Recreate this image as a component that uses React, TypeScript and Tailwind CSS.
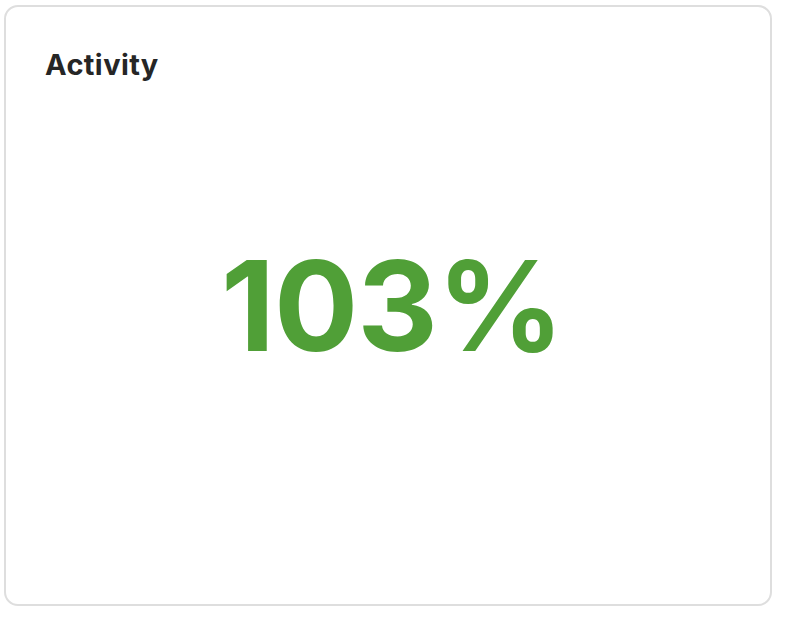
export default function App() {
  return (
    <div className="w-[790px] h-[618px] bg-white pt-[5px] pl-[4px]" style={{ fontFamily: 'Inter, "Noto Sans", sans-serif' }}>
      <div className="relative w-[768px] h-[601px] rounded-[14px] border-2 border-[#dedede] bg-white flex flex-col">
        <h2 className="absolute left-[39px] top-[41px] text-[29px] leading-[34px] font-bold text-[#262626] tracking-[0.4px]">Activity</h2>
        <div className="flex-1 flex items-center justify-center pl-[8px]">
          <span className="text-[125px] leading-none font-bold text-[#509f37] tracking-[-1px]">103%</span>
        </div>
      </div>
    </div>
  )
}
